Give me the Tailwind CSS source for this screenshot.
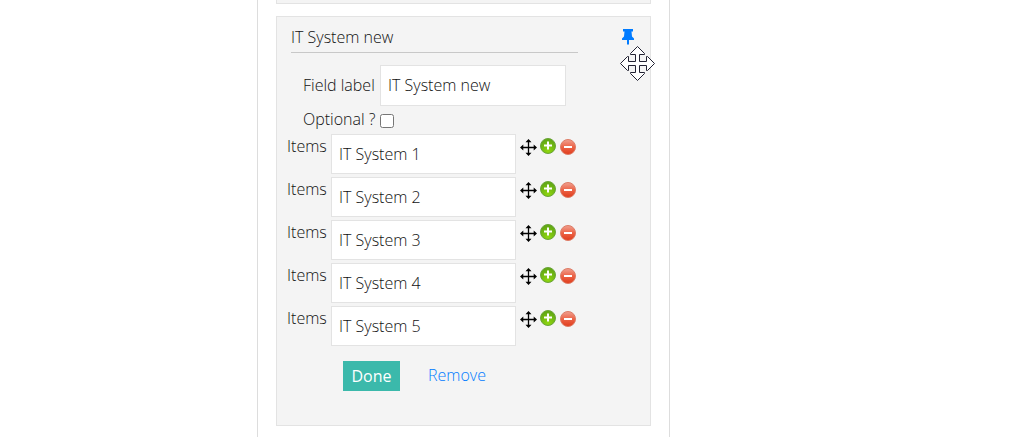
<!DOCTYPE html>
<html lang="en">
<head>
    <meta charset="UTF-8">
    <meta name="viewport" content="width=device-width, initial-scale=1.0">
    <title>Form fields</title>
    <script src="https://cdn.jsdelivr.net/npm/@tailwindcss/browser@4"></script>
</head>
<body class="bg-white font-['Open_Sans',sans-serif] font-light text-base text-[#111]">

    <!-- Shared icons -->
    <svg class="absolute w-0 h-0">
        <defs>
            <radialGradient id="green" cx="50%" cy="85%" r="75%">
                <stop offset="0" stop-color="#8fd60f"/>
                <stop offset="1" stop-color="#62a814"/>
            </radialGradient>
            <linearGradient id="red" x1="0" y1="0" x2="0" y2="1">
                <stop offset="0" stop-color="#f0a090"/>
                <stop offset=".5" stop-color="#ec6346"/>
                <stop offset="1" stop-color="#e03c1c"/>
            </linearGradient>
        </defs>
        <symbol id="move" viewBox="0 0 17 17">
            <path d="M8.500 2v13M2 8.500h13" stroke="#000" stroke-width="1.300"/>
            <path d="M8.500 0l3 3.300h-6zM8.500 17l3-3.300h-6zM0 8.500l3.300-3v6zM17 8.500l-3.300-3v6z"/>
        </symbol>
        <symbol id="add" viewBox="0 0 16 16">
            <circle cx="8" cy="8" r="7.500" fill="url(#green)" stroke="#6ba53a"/>
            <path d="M8 3.500v8M4 7.500h8" stroke="#fff" stroke-width="2"/>
        </symbol>
        <symbol id="delete" viewBox="0 0 16 16">
            <circle cx="8" cy="8" r="7.500" fill="url(#red)" stroke="#dd7c66"/>
            <path d="M4 8h8" stroke="#fff" stroke-width="2"/>
        </symbol>
    </svg>

    <main class="ml-[257px] max-w-[413px] min-h-screen border-x border-[#ddd] px-[18px]">
        <div class="h-1 border border-t-0 border-[#e3e3e3] bg-[#f4f4f4]"></div>

        <section class="relative mt-3 border border-[#e3e3e3] bg-[#f4f4f4] pl-[14px] pr-4 pb-[34px]">
            <div class="flex justify-between items-start">
                <h2 class="w-[287px] border-b border-[#c8c8c8] pt-2 pb-[3px] leading-6">IT System new</h2>
                <button type="button" aria-label="Pin" class="mt-3">
                    <svg class="block w-3 h-4" viewBox="0 0 12 16" fill="#007bff"><path d="M1 0h10v2.500H9.500l.5 5 2 2V11H7v4.500H5V11H0V9.500l2-2 .5-5H1z"/></svg>
                </button>
            </div>

            <form>
                <div class="mt-3 pl-3 flex items-center gap-[3px]">
                    <label for="fieldLabel" class="w-[74px] pb-0.5 whitespace-nowrap">Field label</label>
                    <input type="text" id="fieldLabel" value="IT System new" class="w-[186px] h-[41px] border border-[#e3e3e3] bg-white px-[7px] pb-0.5">
                </div>
                <div class="pl-3 h-7 flex items-center gap-[3px]">
                    <label for="optional" class="w-[74px] pb-0.5 whitespace-nowrap">Optional ?</label>
                    <input type="checkbox" id="optional" class="w-[14px] h-[14px] mt-0.5">
                </div>

                <!-- Items -->
                <div class="-ml-1 flex flex-col gap-[3px]">
                    <div class="flex gap-[3px]">
                        <label for="item1" class="w-[41px] leading-6">Items</label>
                        <input type="text" id="item1" value="IT System 1" class="w-[185px] h-10 border border-[#e3e3e3] bg-white px-[7px]">
                        <div class="flex items-start gap-[3px] pt-1 pl-px">
                            <button type="button" aria-label="Move"><svg class="block w-[17px] h-[17px] mt-px"><use href="#move"/></svg></button>
                            <button type="button" aria-label="Add"><svg class="block w-4 h-4"><use href="#add"/></svg></button>
                            <button type="button" aria-label="Delete" class="pl-px pt-px"><svg class="block w-4 h-4"><use href="#delete"/></svg></button>
                        </div>
                    </div>
                    <div class="flex gap-[3px]">
                        <label for="item2" class="w-[41px] leading-6">Items</label>
                        <input type="text" id="item2" value="IT System 2" class="w-[185px] h-10 border border-[#e3e3e3] bg-white px-[7px]">
                        <div class="flex items-start gap-[3px] pt-1 pl-px">
                            <button type="button" aria-label="Move"><svg class="block w-[17px] h-[17px] mt-px"><use href="#move"/></svg></button>
                            <button type="button" aria-label="Add"><svg class="block w-4 h-4"><use href="#add"/></svg></button>
                            <button type="button" aria-label="Delete" class="pl-px pt-px"><svg class="block w-4 h-4"><use href="#delete"/></svg></button>
                        </div>
                    </div>
                    <div class="flex gap-[3px]">
                        <label for="item3" class="w-[41px] leading-6">Items</label>
                        <input type="text" id="item3" value="IT System 3" class="w-[185px] h-10 border border-[#e3e3e3] bg-white px-[7px]">
                        <div class="flex items-start gap-[3px] pt-1 pl-px">
                            <button type="button" aria-label="Move"><svg class="block w-[17px] h-[17px] mt-px"><use href="#move"/></svg></button>
                            <button type="button" aria-label="Add"><svg class="block w-4 h-4"><use href="#add"/></svg></button>
                            <button type="button" aria-label="Delete" class="pl-px pt-px"><svg class="block w-4 h-4"><use href="#delete"/></svg></button>
                        </div>
                    </div>
                    <div class="flex gap-[3px]">
                        <label for="item4" class="w-[41px] leading-6">Items</label>
                        <input type="text" id="item4" value="IT System 4" class="w-[185px] h-10 border border-[#e3e3e3] bg-white px-[7px]">
                        <div class="flex items-start gap-[3px] pt-1 pl-px">
                            <button type="button" aria-label="Move"><svg class="block w-[17px] h-[17px] mt-px"><use href="#move"/></svg></button>
                            <button type="button" aria-label="Add"><svg class="block w-4 h-4"><use href="#add"/></svg></button>
                            <button type="button" aria-label="Delete" class="pl-px pt-px"><svg class="block w-4 h-4"><use href="#delete"/></svg></button>
                        </div>
                    </div>
                    <div class="flex gap-[3px]">
                        <label for="item5" class="w-[41px] leading-6">Items</label>
                        <input type="text" id="item5" value="IT System 5" class="w-[185px] h-10 border border-[#e3e3e3] bg-white px-[7px]">
                        <div class="flex items-start gap-[3px] pt-1 pl-px">
                            <button type="button" aria-label="Move"><svg class="block w-[17px] h-[17px] mt-px"><use href="#move"/></svg></button>
                            <button type="button" aria-label="Add"><svg class="block w-4 h-4"><use href="#add"/></svg></button>
                            <button type="button" aria-label="Delete" class="pl-px pt-px"><svg class="block w-4 h-4"><use href="#delete"/></svg></button>
                        </div>
                    </div>
                </div>

                <div class="mt-[15px] pl-[52px] flex items-center gap-7">
                    <button type="submit" class="w-[57px] h-[30px] bg-[#3bb9ab] font-normal text-white">Done</button>
                    <a href="#" class="pb-0.5 text-[#007bff]">Remove</a>
                </div>
            </form>

            <!-- Drag cursor -->
            <svg class="absolute top-[29px] -right-[5px] w-[35px] h-[35px]" viewBox="0 0 35 35" fill="#fff" stroke="#223">
                <path d="M17.500.5l7 7v1h-5v7h7v-5h1l7 7-7 7h-1v-5h-7v7h5v1l-7 7-7-7v-1h5v-7h-7v5h-1l-7-7 7-7h1v5h7v-7h-5v-1z"/>
            </svg>
        </section>
    </main>

</body>
</html>
